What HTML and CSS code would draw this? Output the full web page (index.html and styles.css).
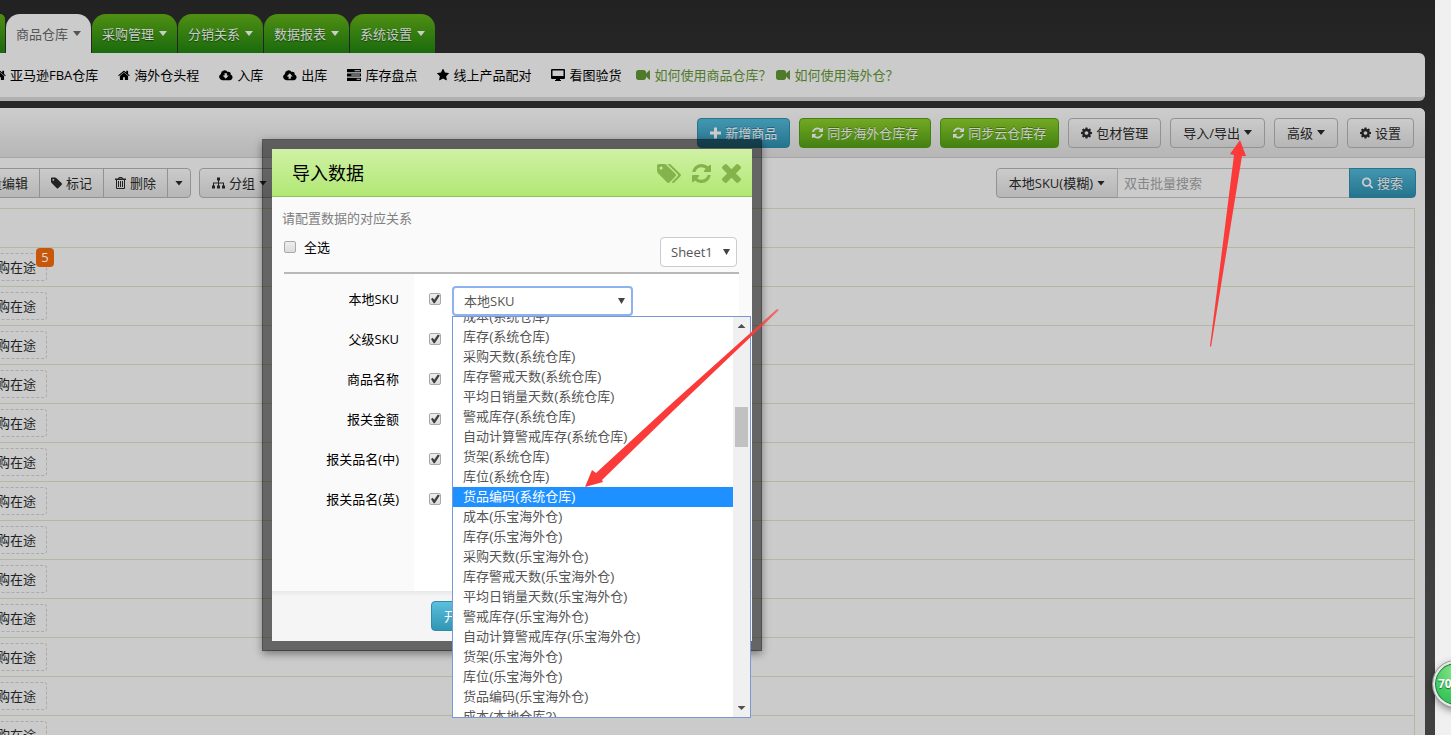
FILE: index.html
```html
<!DOCTYPE html>
<html lang="zh-CN">

<head>
    <meta charset="utf-8">
    <title>商品仓库</title>
    <link rel="stylesheet" href="styles.css">
</head>

<body>
    <!-- Icon definitions -->
    <svg class="sprite" width="0" height="0" aria-hidden="true">
        <symbol id="home" viewBox="60 100 1680 1500"><path d="M1472 992v480q0 26-19 45t-45 19h-384v-384h-256v384h-384q-26 0-45-19t-19-45v-480q0-1 .5-3t.5-3l575-474 575 474q1 2 1 6zm223-69l-62 74q-8 9-21 11h-3q-13 0-21-7l-692-577-692 577q-12 8-24 7-13-2-21-11l-62-74q-8-10-7-23.5t11-21.5l719-599q32-26 76-26t76 26l244 204v-195q0-14 9-23t23-9h192q14 0 23 9t9 23v408l219 182q10 8 11 21.5t-7 23.5z"/></symbol>
        <symbol id="star" viewBox="64 60 1664 1664"><path d="M1728 647q0 22-26 48l-363 354 86 500q1 7 1 20 0 21-10.5 35.5t-30.5 14.5q-19 0-40-12l-449-236-449 236q-22 12-40 12-21 0-31.5-14.5t-10.5-35.5q0-6 2-20l86-500-364-354q-25-27-25-48 0-37 56-46l502-73 225-455q19-41 49-41t49 41l225 455 502 73q56 9 56 46z"/></symbol>
        <symbol id="refresh" viewBox="128 128 1536 1536"><path d="M1639 1056q0 5-1 7-64 268-268 434.5t-478 166.5q-146 0-282.5-55t-243.5-157l-129 129q-19 19-45 19t-45-19-19-45v-448q0-26 19-45t45-19h448q26 0 45 19t19 45-19 45l-137 137q71 66 161 102t187 36q134 0 250-65t186-179q11-17 53-117 8-23 30-23h192q13 0 22.5 9.5t9.5 22.5zm25-800v448q0 26-19 45t-45 19h-448q-26 0-45-19t-19-45 19-45l138-138q-148-137-349-137-134 0-250 65t-186 179q-11 17-53 117-8 23-30 23h-199q-13 0-22.5-9.5t-9.5-22.5v-7q65-268 270-434.5t480-166.5q146 0 284 55.5t245 156.5l130-129q19-19 45-19t45 19 19 45z"/></symbol>
        <symbol id="cog" viewBox="128 128 1536 1536"><path d="M1152 896q0-106-75-181t-181-75-181 75-75 181 75 181 181 75 181-75 75-181zm512-109v222q0 12-8 23t-20 13l-185 28q-19 54-39 91 35 50 107 138 10 12 10 25t-9 23q-27 37-99 108t-94 71q-12 0-26-9l-138-108q-44 23-91 38-16 136-29 186-7 28-36 28h-222q-14 0-24.5-8.5t-11.5-21.5l-28-184q-49-16-90-37l-141 107q-10 9-25 9-14 0-25-11-126-114-165-168-7-10-7-23 0-12 8-23 15-21 51-66.5t54-70.5q-27-50-41-99l-183-27q-13-2-21-12.5t-8-23.5v-222q0-12 8-23t19-13l186-28q14-46 39-92-40-57-107-138-10-12-10-24 0-10 9-23 26-36 98.5-107.5t94.5-71.5q13 0 26 10l138 107q44-23 91-38 16-136 29-186 7-28 36-28h222q14 0 24.5 8.5t11.5 21.5l28 184q49 16 90 37l142-107q9-9 24-9 13 0 25 10 129 119 165 170 7 8 7 22 0 12-8 23-15 21-51 66.5t-54 70.5q26 50 41 98l183 28q13 2 21 12.5t8 23.5z"/></symbol>
        <symbol id="search" viewBox="64 128 1664 1664"><path d="M1216 832q0-185-131.5-316.5t-316.5-131.5-316.5 131.5-131.5 316.5 131.5 316.5 316.5 131.5 316.5-131.5 131.5-316.5zm512 832q0 52-38 90t-90 38q-54 0-90-38l-343-342q-179 124-399 124-143 0-273.5-55.5t-225-150-150-225-55.5-273.5 55.5-273.5 150-225 225-150 273.5-55.5 273.5 55.5 225 150 150 225 55.5 273.5q0 220-124 399l343 343q37 37 37 90z"/></symbol>
        <symbol id="times" viewBox="302 366 1188 1188"><path d="M1490 1322q0 40-28 68l-136 136q-28 28-68 28t-68-28l-294-294-294 294q-28 28-68 28t-68-28l-136-136q-28-28-28-68t28-68l294-294-294-294q-28-28-28-68t28-68l136-136q28-28 68-28t68 28l294 294 294-294q28-28 68-28t68 28l136 136q28 28 28 68t-28 68l-294 294 294 294q28 28 28 68z"/></symbol>
        <symbol id="tag" viewBox="128 128 1516 1516"><path d="M576 448q0-53-37.5-90.5t-90.5-37.5-90.5 37.5-37.5 90.5 37.5 90.5 90.5 37.5 90.5-37.5 37.5-90.5zm1067 576q0 53-37 90l-491 492q-39 37-91 37-53 0-90-37l-715-716q-38-37-64.5-101t-26.5-117v-416q0-52 38-90t90-38h416q53 0 117 26.5t102 64.5l715 714q37 39 37 91z"/></symbol>
        <symbol id="tags" viewBox="128 128 1900 1516"><path d="M576 448q0-53-37.5-90.5t-90.5-37.5-90.5 37.5-37.5 90.5 37.5 90.5 90.5 37.5 90.5-37.5 37.5-90.5zm1067 576q0 53-37 90l-491 492q-39 37-91 37-53 0-90-37l-715-716q-38-37-64.5-101t-26.5-117v-416q0-52 38-90t90-38h416q53 0 117 26.5t102 64.5l715 714q37 39 37 91zm384 0q0 53-37 90l-491 492q-39 37-91 37-36 0-59-14t-53-45l470-470q37-37 37-90 0-52-37-91l-715-714q-38-38-102-64.5t-117-26.5h224q53 0 117 26.5t102 64.5l715 714q37 39 37 91z"/></symbol>
        <symbol id="video" viewBox="0 288 1792 1216"><path d="M1792 352v1088q0 42-39 59-13 5-25 5-27 0-45-19l-403-403v166q0 119-84.5 203.5t-203.5 84.5h-704q-119 0-203.5-84.5t-84.5-203.5v-704q0-119 84.5-203.5t203.5-84.5h704q119 0 203.5 84.5t84.5 203.5v165l403-402q18-19 45-19 12 0 25 5 39 17 39 59z"/></symbol>
        <symbol id="cloud-down" viewBox="0 0 15 11"><path fill-rule="evenodd" d="M3.5 11A3.5 3.5 0 0 1 2 4.4A4 4 0 0 1 9.400 2.300A2.200 2.200 0 0 1 12.400 5A3.100 3.100 0 0 1 12 11ZM6 3.500V6H4L7.200 9.500L10.400 6H8.400V3.500Z"/></symbol>
        <symbol id="cloud-up" viewBox="0 0 15 11"><path fill-rule="evenodd" d="M3.500 11A3.500 3.500 0 0 1 2 4.400A4 4 0 0 1 9.400 2.300A2.200 2.200 0 0 1 12.400 5A3.100 3.100 0 0 1 12 11ZM6 9.500V7H4L7.200 3.500L10.400 7H8.400V9.500Z"/></symbol>
        <symbol id="server" viewBox="0 0 13 11"><path fill-rule="evenodd" d="M0 0H13V3H0ZM0 4H13V7H0ZM0 8H13V11H0ZM7 1H12V2H7ZM4 5H12V6H4ZM9 9H12V10H9Z"/></symbol>
        <symbol id="desktop" viewBox="0 0 14 12"><path fill-rule="evenodd" d="M1 0H13Q14 0 14 1V9Q14 10 13 10H9V11H10V12H4V11H5V10H1Q0 10 0 9V1Q0 0 1 0ZM1.500 1.500V7H12.500V1.500Z"/></symbol>
        <symbol id="plus" viewBox="0 0 11 11"><path d="M4 0H7V4H11V7H7V11H4V7H0V4H4Z"/></symbol>
        <symbol id="trash" viewBox="0 0 11 12"><path fill-rule="evenodd" d="M3 1.500L4 0H7L8 1.500H11V3H10V11Q10 12 9 12H2Q1 12 1 11V3H0V1.500ZM4.500 1L4.200 1.500H6.800L6.500 1ZM2 3V11H9V3ZM3 4H4V10H3ZM5 4H6V10H5ZM7 4H8V10H7Z"/></symbol>
        <symbol id="sitemap" viewBox="0 0 13 11"><path d="M5 0H8V3H7V5H12V8H13V11H10V8H11V6H7V8H8V11H5V8H6V6H2V8H3V11H0V8H1V5H6V3H5Z"/></symbol>
    </svg>

    <div class="app">
        <nav class="tabs">
            <span class="tab tab-cut"></span>
            <a href="#" class="tab active">商品仓库<i class="caret"></i></a>
            <a href="#" class="tab">采购管理<i class="caret"></i></a>
            <a href="#" class="tab">分销关系<i class="caret"></i></a>
            <a href="#" class="tab">数据报表<i class="caret"></i></a>
            <a href="#" class="tab">系统设置<i class="caret"></i></a>
        </nav>

        <nav class="subnav">
            <a href="#"><svg class="icon"><use href="#home"/></svg>亚马逊FBA仓库</a>
            <a href="#"><svg class="icon"><use href="#home"/></svg>海外仓头程</a>
            <a href="#"><svg class="icon wide"><use href="#cloud-down"/></svg>入库</a>
            <a href="#"><svg class="icon wide"><use href="#cloud-up"/></svg>出库</a>
            <a href="#"><svg class="icon wide"><use href="#server"/></svg>库存盘点</a>
            <a href="#"><svg class="icon"><use href="#star"/></svg>线上产品配对</a>
            <a href="#"><svg class="icon wide"><use href="#desktop"/></svg>看图验货</a>
            <span class="help">
                <a href="#"><svg class="icon wide"><use href="#video"/></svg>如何使用商品仓库？</a>
                <a href="#"><svg class="icon wide"><use href="#video"/></svg>如何使用海外仓？</a>
            </span>
        </nav>

        <main class="panel">
            <div class="panel-header">
                <button type="button" class="btn btn-info"><svg class="icon"><use href="#plus"/></svg>新增商品</button>
                <button type="button" class="btn btn-success"><svg class="icon"><use href="#refresh"/></svg>同步海外仓库存</button>
                <button type="button" class="btn btn-success"><svg class="icon"><use href="#refresh"/></svg>同步云仓库存</button>
                <button type="button" class="btn"><svg class="icon"><use href="#cog"/></svg>包材管理</button>
                <button type="button" class="btn">导入/导出<i class="caret"></i></button>
                <button type="button" class="btn">高级<i class="caret"></i></button>
                <button type="button" class="btn"><svg class="icon"><use href="#cog"/></svg>设置</button>
            </div>

            <div class="toolbar">
                <div class="btn-group edit-group">
                    <button type="button" class="btn">批量编辑</button>
                    <button type="button" class="btn"><svg class="icon"><use href="#tag"/></svg>标记</button>
                    <button type="button" class="btn"><svg class="icon"><use href="#trash"/></svg>删除</button>
                    <button type="button" class="btn btn-caret" aria-label="更多"><i class="caret"></i></button>
                </div>
                <button type="button" class="btn"><svg class="icon wide"><use href="#sitemap"/></svg>分组<i class="caret"></i></button>
                <form class="btn-group search">
                    <button type="button" class="btn">本地SKU(模糊)<i class="caret"></i></button>
                    <input type="text" placeholder="双击批量搜索" aria-label="搜索">
                    <button type="submit" class="btn btn-info"><svg class="icon"><use href="#search"/></svg>搜索</button>
                </form>
            </div>

            <table class="goods">
                <tr><th></th></tr>
                <tr><td><div class="cell"><span class="transit">采购在途<b class="badge">5</b></span></div></td></tr>
                <tr><td><div class="cell"><span class="transit">采购在途</span></div></td></tr>
                <tr><td><div class="cell"><span class="transit">采购在途</span></div></td></tr>
                <tr><td><div class="cell"><span class="transit">采购在途</span></div></td></tr>
                <tr><td><div class="cell"><span class="transit">采购在途</span></div></td></tr>
                <tr><td><div class="cell"><span class="transit">采购在途</span></div></td></tr>
                <tr><td><div class="cell"><span class="transit">采购在途</span></div></td></tr>
                <tr><td><div class="cell"><span class="transit">采购在途</span></div></td></tr>
                <tr><td><div class="cell"><span class="transit">采购在途</span></div></td></tr>
                <tr><td><div class="cell"><span class="transit">采购在途</span></div></td></tr>
                <tr><td><div class="cell"><span class="transit">采购在途</span></div></td></tr>
                <tr><td><div class="cell"><span class="transit">采购在途</span></div></td></tr>
                <tr><td><div class="cell"><span class="transit">采购在途</span></div></td></tr>
            </table>
        </main>
    </div>
    <div class="gutter"></div>

    <!-- Import dialog -->
    <div class="modal" role="dialog" aria-labelledby="modalTitle">
        <div class="modal-header">
            <h3 id="modalTitle">导入数据</h3>
            <button type="button" aria-label="标签"><svg class="tags-icon"><use href="#tags"/></svg></button>
            <button type="button" aria-label="刷新"><svg><use href="#refresh"/></svg></button>
            <button type="button" aria-label="关闭"><svg><use href="#times"/></svg></button>
        </div>
        <div class="modal-top">
            <p>请配置数据的对应关系</p>
            <div class="select-row">
                <label><input type="checkbox">全选</label>
                <select class="sheet" aria-label="工作表">
                    <option>Sheet1</option>
                </select>
            </div>
        </div>
        <div class="mapping">
            <div class="map-row">
                <label for="mapSku">本地SKU</label>
                <div class="map-field">
                    <input type="checkbox" id="mapSku" checked>
                    <div class="dropdown">
                        <select class="focused" aria-label="本地SKU">
                            <option>本地SKU</option>
                        </select>
                        <div class="options">
                            <ul role="listbox" aria-label="字段">
                                <li role="option">成本(系统仓库)</li>
                                <li role="option">库存(系统仓库)</li>
                                <li role="option">采购天数(系统仓库)</li>
                                <li role="option">库存警戒天数(系统仓库)</li>
                                <li role="option">平均日销量天数(系统仓库)</li>
                                <li role="option">警戒库存(系统仓库)</li>
                                <li role="option">自动计算警戒库存(系统仓库)</li>
                                <li role="option">货架(系统仓库)</li>
                                <li role="option">库位(系统仓库)</li>
                                <li role="option" class="selected" aria-selected="true">货品编码(系统仓库)</li>
                                <li role="option">成本(乐宝海外仓)</li>
                                <li role="option">库存(乐宝海外仓)</li>
                                <li role="option">采购天数(乐宝海外仓)</li>
                                <li role="option">库存警戒天数(乐宝海外仓)</li>
                                <li role="option">平均日销量天数(乐宝海外仓)</li>
                                <li role="option">警戒库存(乐宝海外仓)</li>
                                <li role="option">自动计算警戒库存(乐宝海外仓)</li>
                                <li role="option">货架(乐宝海外仓)</li>
                                <li role="option">库位(乐宝海外仓)</li>
                                <li role="option">货品编码(乐宝海外仓)</li>
                                <li role="option">成本(本地仓库2)</li>
                            </ul>
                            <div class="scrollbar">
                                <i class="up"></i>
                                <i class="thumb"></i>
                                <i class="down"></i>
                            </div>
                        </div>
                    </div>
                </div>
            </div>
            <div class="map-row">
                <label for="mapParent">父级SKU</label>
                <div class="map-field"><input type="checkbox" id="mapParent" checked></div>
            </div>
            <div class="map-row">
                <label for="mapName">商品名称</label>
                <div class="map-field"><input type="checkbox" id="mapName" checked></div>
            </div>
            <div class="map-row">
                <label for="mapPrice">报关金额</label>
                <div class="map-field"><input type="checkbox" id="mapPrice" checked></div>
            </div>
            <div class="map-row">
                <label for="mapCn">报关品名(中)</label>
                <div class="map-field"><input type="checkbox" id="mapCn" checked></div>
            </div>
            <div class="map-row">
                <label for="mapEn">报关品名(英)</label>
                <div class="map-field"><input type="checkbox" id="mapEn" checked></div>
            </div>
        </div>
        <div class="modal-footer">
            <button type="button" class="btn btn-start">开始导入</button>
        </div>
    </div>

    <!-- Pointer arrows over the page -->
    <svg class="arrow arrow-option" viewBox="0 0 194 179">
        <defs>
            <linearGradient id="fade" x1="1" y1="0" x2="0.200" y2="0.800">
                <stop offset="0" stop-color="#fb3b3a" stop-opacity="0.600"/>
                <stop offset="0.200" stop-color="#fb3b3a"/>
            </linearGradient>
        </defs>
        <path fill="url(#fade)" d="M0 178L7 161L11 164L85 96L192 0L194 1L89 101L17 171L18 173Z"/>
    </svg>
    <svg class="arrow arrow-menu" viewBox="0 0 37 207">
        <path fill="#fb3b3a" d="M30 0L36 16L32 16L1 207L0 206L24 15L20 14Z"/>
    </svg>

    <div class="ball">70</div>
</body>

</html>
```
FILE: styles.css
```css
* {
    box-sizing: border-box;
}

body {
    margin: 0;
    height: 100vh;
    display: flex;
    overflow: hidden;
    position: relative;
    background: linear-gradient(#222, #292929 110px, #2d2d2d 240px, #404040 600px);
    font: 13px/20px "Open Sans", "Noto Sans CJK SC", sans-serif;
    color: #222;
}

.sprite {
    position: absolute;
}

a {
    color: inherit;
    text-decoration: none;
}

button,
input,
select {
    font: inherit;
    color: inherit;
    margin: 0;
}

.app {
    flex: 1;
    min-width: 0;
    padding: 14px 10px 0 0;
    display: flex;
    flex-direction: column;
    overflow: hidden;
}

.gutter {
    width: 16px;
    background: #f0f0f0;
}

.icon {
    width: 12px;
    height: 12px;
    fill: currentColor;
    flex: none;
}

.icon.wide {
    width: 14px;
}

.caret {
    width: 8px;
    height: 5px;
    background: currentColor;
    clip-path: polygon(0 0, 100% 0, 50% 100%);
}

/* Tabs */
.tabs {
    display: flex;
    gap: 1px;
    height: 39px;
}

.tab {
    width: 85px;
    display: flex;
    align-items: center;
    justify-content: center;
    gap: 5px;
    border-radius: 14px 14px 0 0;
    background: linear-gradient(#4f8f13, #1a6a0d);
    color: #ccc;
    text-shadow: 0 1px 1px #12400a;
}

.tab.active {
    background: #cbcbcb;
    color: #555;
    text-shadow: none;
}

.tab-cut {
    width: 5px;
    border-radius: 0 8px 0 0;
}

.subnav {
    display: flex;
    align-items: center;
    gap: 20px;
    height: 48px;
    border-bottom: 4px solid #b1b1b1;
    border-radius: 0 6px 6px 0;
    background: #cbcbcb;
    color: #000;
    white-space: nowrap;
    overflow: hidden;
}

.subnav a {
    display: flex;
    align-items: center;
    gap: 4px;
}

.subnav > a:first-child {
    margin-left: -6px;
}

.help {
    display: flex;
    gap: 5px;
    margin-left: -5px;
    color: #4f7a2c;
}

/* Buttons */
.btn {
    display: flex;
    align-items: center;
    gap: 4px;
    height: 30px;
    padding: 0 12px;
    border: 1px solid #929292;
    border-radius: 4px;
    background: linear-gradient(#cbcbcb, #b6b6b6);
    white-space: nowrap;
    cursor: pointer;
}

.btn .icon {
    width: 11px;
}

.btn .icon.wide {
    width: 13px;
}

.btn-info,
.btn-success {
    color: #ccc;
    text-shadow: 0 -1px 0 rgba(0, 0, 0, 0.3);
}

.btn-info {
    border-color: #28728a;
    background: linear-gradient(#4396b1, #25748e);
}

.btn-success {
    border-color: #42800f;
    background: linear-gradient(#73a824, #438111);
}

.btn-group {
    display: flex;
}

.btn-group > * {
    border-radius: 0;
    margin-left: -1px;
}

.btn-group > :first-child {
    border-radius: 4px 0 0 4px;
}

.btn-group > :last-child {
    border-radius: 0 4px 4px 0;
}

.panel {
    flex: 1;
    margin-top: 7px;
    border-radius: 0 6px 0 0;
    background: #cbcbcb;
    overflow: hidden;
}

.panel-header {
    display: flex;
    justify-content: flex-end;
    align-items: center;
    gap: 9px;
    height: 50px;
    padding-right: 11px;
    border-bottom: 1px solid #a7a7a7;
    background: linear-gradient(#cdcdcd, #b6b6b6);
}

.toolbar {
    display: flex;
    gap: 8px;
    padding: 10px 9px 10px 0;
}

.edit-group {
    width: 191px;
    justify-content: flex-end;
    overflow: hidden;
}

.edit-group .btn {
    padding: 0 11px;
}

.edit-group .btn-caret {
    padding: 0 7px;
}

.search {
    margin-left: auto;
}

.search input {
    width: 233px;
    padding: 0 6px;
    border: 1px solid #a0a0a0;
    background: #cbcbcb;
}

.search input::placeholder {
    color: #858585;
}

/* Goods list */
.goods {
    width: calc(100% - 10px);
    border-collapse: collapse;
}

.goods th,
.goods td {
    height: 39px;
    padding: 0;
    border: 1px solid #aebb9e;
    border-left: none;
}

.cell {
    display: flex;
    justify-content: flex-end;
    width: 47px;
}

.transit {
    position: relative;
    padding: 3px 10px;
    border: 1px dashed #aaa;
    border-radius: 3px;
    white-space: nowrap;
}

.badge {
    position: absolute;
    top: -6px;
    right: -8px;
    width: 18px;
    height: 19px;
    border-radius: 4px;
    background: #c9570a;
    color: #ddd;
    font-weight: normal;
    line-height: 19px;
    text-align: center;
}

/* Import dialog */
.modal {
    position: absolute;
    left: 262px;
    top: 139px;
    width: 500px;
    border: 10px solid rgba(0, 0, 0, 0.5);
    background: #fafafa;
    background-clip: padding-box;
    box-shadow: 0 3px 8px rgba(0, 0, 0, 0.4);
    color: #000;
}

.modal-header {
    display: flex;
    align-items: center;
    gap: 11px;
    height: 48px;
    padding: 0 11px 0 20px;
    border-bottom: 1px solid #8fc45f;
    background: linear-gradient(#d0f1a6, #b1e874);
}

.modal-header h3 {
    flex: 1;
    margin: 0;
    font-size: 18px;
    font-weight: normal;
}

.modal-header button {
    display: flex;
    padding: 2px 0 0;
    border: none;
    background: none;
}

.modal-header svg {
    width: 19px;
    height: 19px;
    fill: #83b34a;
}

.modal-header .tags-icon {
    width: 24px;
}

.modal-top {
    margin: 0 13px 0 12px;
    padding-top: 11px;
    border-bottom: 2px solid #b8b8b8;
}

.modal-top p {
    margin: 0 0 0 -2px;
    color: #808080;
}

.select-row {
    display: flex;
    justify-content: space-between;
    padding: 9px 2px 5px 0;
}

.select-row label {
    display: flex;
    align-items: center;
    gap: 8px;
    height: 20px;
}

input[type="checkbox"] {
    appearance: none;
    flex: none;
    width: 12px;
    height: 12px;
    border: 1px solid #a9a9a9;
    border-radius: 2px;
    background: linear-gradient(#eee, #dcdcdc);
}

input[type="checkbox"]:checked::after {
    content: "";
    display: block;
    width: 10px;
    height: 10px;
    background: #404040;
    clip-path: polygon(10% 50%, 27% 38%, 42% 58%, 78% 5%, 98% 16%, 48% 92%, 36% 92%);
}

select {
    appearance: none;
    height: 30px;
    padding: 0 10px;
    border: 1px solid #ccc;
    border-radius: 4px;
    background: #fff url("data:image/svg+xml,%3Csvg xmlns='http://www.w3.org/2000/svg' width='7' height='6'%3E%3Cpath fill='%23444' d='M0 0h7L3.500 6z'/%3E%3C/svg%3E") no-repeat right 6px center;
    color: #555;
}

.sheet {
    width: 77px;
}

.mapping {
    min-height: 317px;
    padding-top: 5px;
    background: linear-gradient(90deg, #fafafa 142px, #fff 142px, #fff 467px, #fafafa 467px);
}

.map-row {
    display: flex;
    align-items: center;
    height: 40px;
}

.map-row label {
    width: 127px;
    text-align: right;
}

.map-field {
    display: flex;
    align-items: center;
    gap: 11px;
    padding-left: 30px;
}

.dropdown {
    position: relative;
    padding-top: 4px;
}

.dropdown .focused {
    display: block;
    width: 181px;
    border: 2px solid #8db2ef;
}

.options {
    position: absolute;
    z-index: 2;
    top: 100%;
    left: 0;
    display: flex;
    width: 299px;
    height: 402px;
    border: 1px solid #7899d6;
    background: #fff;
    color: #555;
}

.options ul {
    flex: 1;
    display: flex;
    flex-direction: column;
    justify-content: center;
    margin: 0;
    padding: 0;
    list-style: none;
    overflow: hidden;
}

.options li {
    flex: none;
    height: 20px;
    padding-left: 10px;
    font-family: "Liberation Sans", "Noto Sans CJK SC", sans-serif;
    white-space: nowrap;
}

.options .selected {
    background: #1e90ff;
    color: #fff;
}

.scrollbar {
    display: flex;
    flex-direction: column;
    align-items: center;
    width: 17px;
    padding: 7px 0;
    background: #f0f0f0;
}

.scrollbar .up,
.scrollbar .down {
    width: 8px;
    height: 4px;
    background: #505050;
}

.scrollbar .up {
    clip-path: polygon(50% 0, 100% 100%, 0 100%);
}

.scrollbar .down {
    clip-path: polygon(0 0, 100% 0, 50% 100%);
}

.scrollbar .thumb {
    width: 13px;
    height: 40px;
    margin: 79px 0 auto;
    background: #c1c1c1;
}

.modal-footer {
    padding: 10px 159px;
    background: linear-gradient(#e8e8e8, #f5f5f5 6px);
}

.btn-start {
    border-color: #2f8ba8;
    background: linear-gradient(#5bbfdd, #2f96b4);
    color: #fff;
}

/* Overlays */
.arrow {
    position: absolute;
    z-index: 3;
    pointer-events: none;
}

.arrow-option {
    left: 585px;
    top: 309px;
    width: 194px;
    height: 179px;
}

.arrow-menu {
    left: 1210px;
    top: 140px;
    width: 37px;
    height: 207px;
}

.ball {
    position: absolute;
    right: -28px;
    top: 661px;
    width: 46px;
    height: 46px;
    padding-left: 3px;
    border: 2px solid #e8e8e8;
    border-radius: 50%;
    background: radial-gradient(circle at 50% 20%, #8ee58e, #3ecb5c 60%, #35b553);
    box-shadow: inset 0 0 0 1px #1c7a45, 0 0 0 1px #999, 0 3px 8px rgba(0, 0, 0, 0.5);
    color: #fff;
    font-size: 12px;
    font-weight: bold;
    line-height: 42px;
    text-shadow: 0 1px 1px #1c6a35;
}
```
